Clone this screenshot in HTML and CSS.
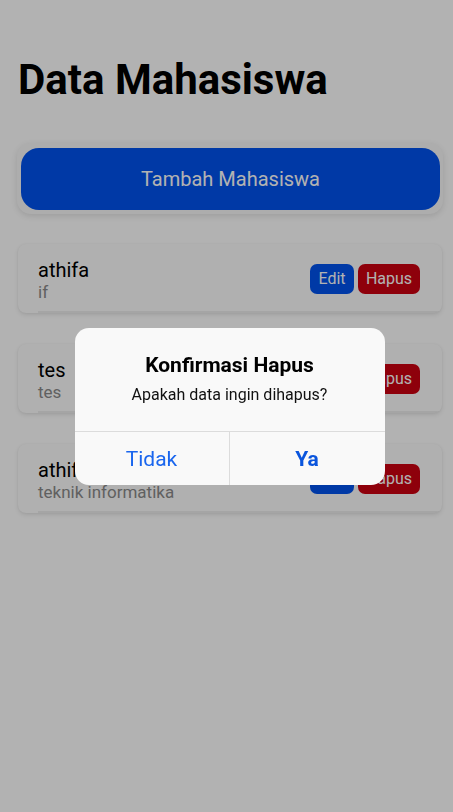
FILE: index.html
```html
<!DOCTYPE html>
<html lang="id">
<head>
<meta charset="utf-8">
<title>Data Mahasiswa</title>
<link rel="stylesheet" href="styles.css">
</head>
<body>
<main class="page">
  <h1 class="title">Data Mahasiswa</h1>
  <div class="add-wrap">
    <button class="add-btn">Tambah Mahasiswa</button>
  </div>
  <ul class="list">
    <li class="card">
      <div class="info">
        <div class="name">athifa</div>
        <div class="major">if</div>
      </div>
      <div class="actions">
        <button class="btn edit">Edit</button>
        <button class="btn del">Hapus</button>
      </div>
    </li>
    <li class="card">
      <div class="info">
        <div class="name">tes</div>
        <div class="major">tes</div>
      </div>
      <div class="actions">
        <button class="btn edit">Edit</button>
        <button class="btn del">Hapus</button>
      </div>
    </li>
    <li class="card">
      <div class="info">
        <div class="name">athifa</div>
        <div class="major">teknik informatika</div>
      </div>
      <div class="actions">
        <button class="btn edit">Edit</button>
        <button class="btn del">Hapus</button>
      </div>
    </li>
  </ul>
</main>
<div class="overlay">
  <div class="dialog">
    <div class="dialog-body">
      <div class="dialog-title">Konfirmasi Hapus</div>
      <div class="dialog-msg">Apakah data ingin dihapus?</div>
    </div>
    <div class="dialog-actions">
      <button class="dlg-btn no">Tidak</button>
      <button class="dlg-btn yes">Ya</button>
    </div>
  </div>
</div>
</body>
</html>
```
FILE: styles.css
```css
* { box-sizing: border-box; }
html, body {
  margin: 0;
  padding: 0;
  background: #ffffff;
  font-family: Roboto, "Noto Sans", sans-serif;
  width: 453px;
  height: 812px;
  overflow: hidden;
}
.page {
  padding: 0 10px 0 17px;
  display: flex;
  flex-direction: column;
}
.title {
  margin: 56px 0 0 1px;
  font-size: 42px;
  font-weight: 700;
  line-height: 48px;
  color: #000;
  letter-spacing: 0;
}
.add-wrap {
  margin-top: 39px;
  background: #f8f8f8;
  border-radius: 14px;
  padding: 5px 3px 4px 4px;
  box-shadow: 0 2px 6px rgba(0,0,0,0.12);
}
.add-btn {
  display: block;
  width: 100%;
  height: 62px;
  border: none;
  border-radius: 18px;
  background: #0052ee;
  color: #ffffff;
  font-family: Roboto, sans-serif;
  font-size: 20px;
  padding: 0;
}
.list {
  list-style: none;
  margin: 30px 0 0 1px;
  padding: 0;
  display: flex;
  flex-direction: column;
  gap: 31px;
  width: 424px;
}
.card {
  height: 69px;
  background: #fcfcfc;
  border-radius: 8px;
  box-shadow: 0 2px 4px rgba(0,0,0,0.10), 0 0 2px rgba(0,0,0,0.05);
  display: flex;
  align-items: center;
  justify-content: space-between;
  padding: 0 22px 0 20px;
  position: relative;
  overflow: hidden;
}
.card::after {
  content: "";
  position: absolute;
  left: 20px;
  right: 0;
  bottom: 0;
  height: 2px;
  background: rgba(0,0,0,0.06);
}
.info {
  display: flex;
  flex-direction: column;
  padding-top: 3px;
}
.name {
  font-size: 20px;
  line-height: 24px;
  color: #000;
}
.major {
  font-size: 17px;
  line-height: 20px;
  color: #8a8a8a;
}
.actions {
  display: flex;
  gap: 4px;
}
.btn {
  border: none;
  height: 30px;
  border-radius: 7px;
  color: #ffffff;
  font-family: Roboto, sans-serif;
  font-size: 16px;
  padding: 0 8px;
}
.edit { background: #0052ee; width: 44px; padding: 0; }
.del { background: #cc0011; width: 62px; padding: 0; }
.overlay {
  position: fixed;
  inset: 0;
  background: rgba(0,0,0,0.3);
  display: flex;
  justify-content: center;
  align-items: flex-start;
}
.dialog {
  margin-top: 328px;
  margin-left: 6px;
  width: 310px;
  background: #f9f9f9;
  border-radius: 14px;
  overflow: hidden;
}
.dialog-body {
  padding: 23px 16px 0;
  height: 104px;
  text-align: center;
  border-bottom: 1px solid #dcdcdc;
}
.dialog-title {
  font-size: 21px;
  font-weight: 700;
  line-height: 28px;
  color: #000;
}
.dialog-msg {
  margin-top: 6px;
  font-size: 16px;
  line-height: 20px;
  color: #111;
}
.dialog-actions {
  display: grid;
  grid-template-columns: 1fr 1fr;
  height: 53px;
}
.dlg-btn {
  border: none;
  background: transparent;
  font-family: Roboto, sans-serif;
  font-size: 21px;
  padding: 0;
  color: #1a66ee;
}
.dlg-btn.no { border-right: 1px solid #dcdcdc; }
.dlg-btn.yes { font-weight: 700; color: #0a55dd; }
```
